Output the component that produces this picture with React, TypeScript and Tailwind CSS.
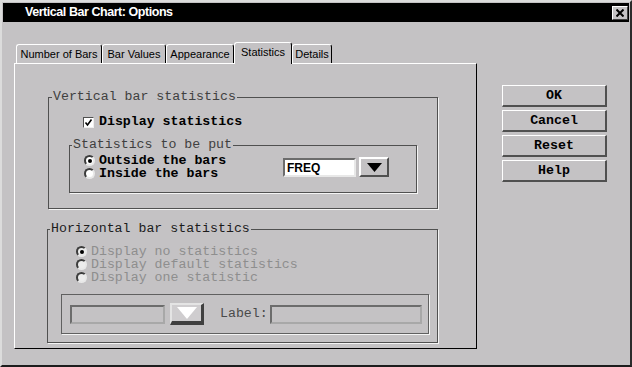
const MONO = "font-['Liberation_Mono','DejaVu_Sans_Mono',monospace] text-[13.25px]";

const TABS = [
  { label: 'Number of Bars', w: 'w-[86px]' },
  { label: 'Bar Values', w: 'w-[64px]' },
  { label: 'Appearance', w: 'w-[68px]' },
  { label: 'Statistics', w: 'w-[58px]', active: true },
  { label: 'Details', w: 'w-[40px]' },
];

const BUTTONS = ['OK', 'Cancel', 'Reset', 'Help'];

function Radio({ on, disabled }: { on?: boolean; disabled?: boolean }) {
  return (
    <span
      className={`flex h-[11px] w-[11px] shrink-0 items-center justify-center rounded-full border-2 border-t-[#3c3c3c] border-l-[#3c3c3c] border-r-[#e8e8e8] border-b-[#e8e8e8] ${
        disabled ? 'bg-[#ececec]' : 'bg-white'
      }`}
    >
      {on && <span className="h-[4px] w-[4px] rounded-full bg-black" />}
    </span>
  );
}

function TriangleDown({ fill, w, h }: { fill: string; w: number; h: number }) {
  return (
    <svg width={w} height={h} viewBox={`0 0 ${w} ${h}`}>
      <polygon points={`0,0 ${w},0 ${w / 2},${h}`} fill={fill} />
    </svg>
  );
}

export default function App() {
  return (
    <div className="flex h-[367px] w-[632px] flex-col border-2 border-t-[#dcdcdc] border-l-[#dcdcdc] border-r-[#2c2c2c] border-b-[#1c1c1c] bg-[#c4c2c4]">
      {/* Title bar */}
      <div className="mx-[1px] mt-[1px] flex h-[19px] items-center bg-black">
        <span className="ml-[22px] font-['Liberation_Sans',Arial,sans-serif] text-[12.5px] font-bold leading-none tracking-[-0.45px] text-white">
          Vertical Bar Chart: Options
        </span>
        <span className="ml-auto mr-[1px] flex h-[14px] w-[16px] items-center justify-center border border-t-white border-l-white border-r-[#404040] border-b-[#404040] bg-[#c4c2c4]">
          <svg width="8" height="8" viewBox="0 0 8 8">
            <path d="M0.5 0.5 L7.5 7.5 M7.5 0.5 L0.5 7.5" stroke="#000" strokeWidth="2" />
          </svg>
        </span>
      </div>

      <div className="mt-[20px] flex items-start pl-[12px]">
        {/* Tabs + panel */}
        <div className="flex flex-col">
          <div className="flex items-end pl-[2px]">
            {TABS.map((t) =>
              t.active ? (
                <div
                  key={t.label}
                  className={`relative z-10 -mb-px flex h-[22px] ${t.w} items-center justify-center rounded-t-[3px] border-t border-l border-r border-t-white border-l-white border-r-black bg-[#c4c2c4] pb-[2px] font-['Liberation_Sans',Arial,sans-serif] text-[11px] text-black`}
                >
                  {t.label}
                </div>
              ) : (
                <div
                  key={t.label}
                  className={`flex h-[19px] ${t.w} items-center justify-center rounded-t-[3px] border-t border-l border-r border-t-white border-l-white border-r-black font-['Liberation_Sans',Arial,sans-serif] text-[11px] text-black`}
                >
                  {t.label}
                </div>
              )
            )}
          </div>

          <div className={`flex h-[286px] w-[463px] flex-col border border-t-white border-l-white border-r-black border-b-black ${MONO}`}>
            {/* Vertical bar statistics */}
            <fieldset className="ml-[33px] mt-[26px] h-[119px] w-[390px] border border-[#505050] shadow-[1px_1px_0_#f4f4f4]">
              <legend className="ml-[3px] px-[1px] leading-[14px] text-[#404040]">Vertical bar statistics</legend>
              <div className="pl-[34px] pt-[11px]">
                <div className="flex h-[14px] items-center gap-[5px] font-bold text-black">
                  <span className="flex h-[11px] w-[11px] items-center justify-center border border-t-[#505050] border-l-[#505050] border-r-[#eeeeee] border-b-[#eeeeee] bg-white">
                    <svg width="9" height="9" viewBox="0 0 9 9">
                      <path d="M1.5 4.5 L3.5 7 L7.5 1.5" stroke="#000" strokeWidth="1.6" fill="none" />
                    </svg>
                  </span>
                  <span className="leading-[14px]">Display statistics</span>
                </div>
              </div>

              <fieldset className="ml-[20px] mt-[9px] h-[55px] w-[348px] border border-[#505050] shadow-[1px_1px_0_#f4f4f4]">
                <legend className="ml-[2px] px-[1px] leading-[14px] text-[#404040]">Statistics to be put</legend>
                <div className="flex pl-[14px] pt-[2px]">
                  <div className="flex w-[199px] flex-col font-bold text-black">
                    <div className="flex h-[13px] items-center gap-[4px]">
                      <Radio on />
                      <span className="leading-[13px]">Outside the bars</span>
                    </div>
                    <div className="flex h-[13px] items-center gap-[4px]">
                      <Radio />
                      <span className="leading-[13px]">Inside the bars</span>
                    </div>
                  </div>
                  <div className="mt-[3px] flex items-start gap-[3px]">
                    <div className="mt-[1px] flex h-[19px] w-[73px] items-center border-2 border-t-[#6c6c6c] border-l-[#6c6c6c] border-r-[#e8e8e8] border-b-[#e8e8e8] bg-white pl-[2px] font-['Liberation_Sans',Arial,sans-serif] text-[12px] font-bold text-black">
                      FREQ
                    </div>
                    <div className="flex h-[20px] w-[30px] items-center justify-center border-2 border-t-white border-l-white border-r-[#505050] border-b-[#505050] bg-[#c4c2c4]">
                      <TriangleDown fill="#000" w={15} h={9} />
                    </div>
                  </div>
                </div>
              </fieldset>
            </fieldset>

            {/* Horizontal bar statistics */}
            <fieldset className="ml-[32px] mt-[13px] h-[121px] w-[391px] border border-[#505050] shadow-[1px_1px_0_#f4f4f4]">
              <legend className="ml-[2px] px-[1px] leading-[14px] text-[#1c1c1c]">Horizontal bar statistics</legend>
              <div className="flex flex-col pl-[28px] pt-[9px] text-[#8e8e8e]">
                <div className="flex h-[13px] items-center gap-[4px]">
                  <Radio on disabled />
                  <span className="leading-[13px]">Display no statistics</span>
                </div>
                <div className="flex h-[13px] items-center gap-[4px]">
                  <Radio disabled />
                  <span className="leading-[13px]">Display default statistics</span>
                </div>
                <div className="flex h-[13px] items-center gap-[4px]">
                  <Radio disabled />
                  <span className="leading-[13px]">Display one statistic</span>
                </div>
              </div>

              <div className="ml-[13px] mt-[10px] flex h-[40px] w-[368px] items-center border border-[#606060] pl-[8px] shadow-[1px_1px_0_#f4f4f4]">
                <div className="h-[19px] w-[95px] border-2 border-t-[#6c6c6c] border-l-[#6c6c6c] border-r-[#a8a8a8] border-b-[#a8a8a8] bg-[#c4c2c4]" />
                <div className="ml-[5px] flex h-[22px] w-[34px] items-center justify-center border-t-2 border-l-2 border-r-[3px] border-b-[4px] border-t-[#e4e4e4] border-l-[#e4e4e4] border-r-[#404040] border-b-[#404040] bg-[#cfcdcf]">
                  <TriangleDown fill="#fff" w={20} h={12} />
                </div>
                <span className="ml-[16px] leading-[14px] text-[#4a4a4a]">Label:</span>
                <div className="ml-[2px] h-[19px] w-[152px] border-2 border-t-[#6c6c6c] border-l-[#6c6c6c] border-r-[#a8a8a8] border-b-[#a8a8a8] bg-[#c4c2c4]" />
              </div>
            </fieldset>
          </div>
        </div>

        {/* Buttons */}
        <div className={`ml-[25px] mt-[43px] flex flex-col gap-[3px] ${MONO}`}>
          {BUTTONS.map((b) => (
            <button
              key={b}
              className="flex h-[22px] w-[105px] items-center justify-center border-t border-l border-r-2 border-b-2 border-t-white border-l-white border-r-[#505050] border-b-[#505050] bg-[#c4c2c4] font-bold leading-none text-black"
            >
              {b}
            </button>
          ))}
        </div>
      </div>
    </div>
  );
}
